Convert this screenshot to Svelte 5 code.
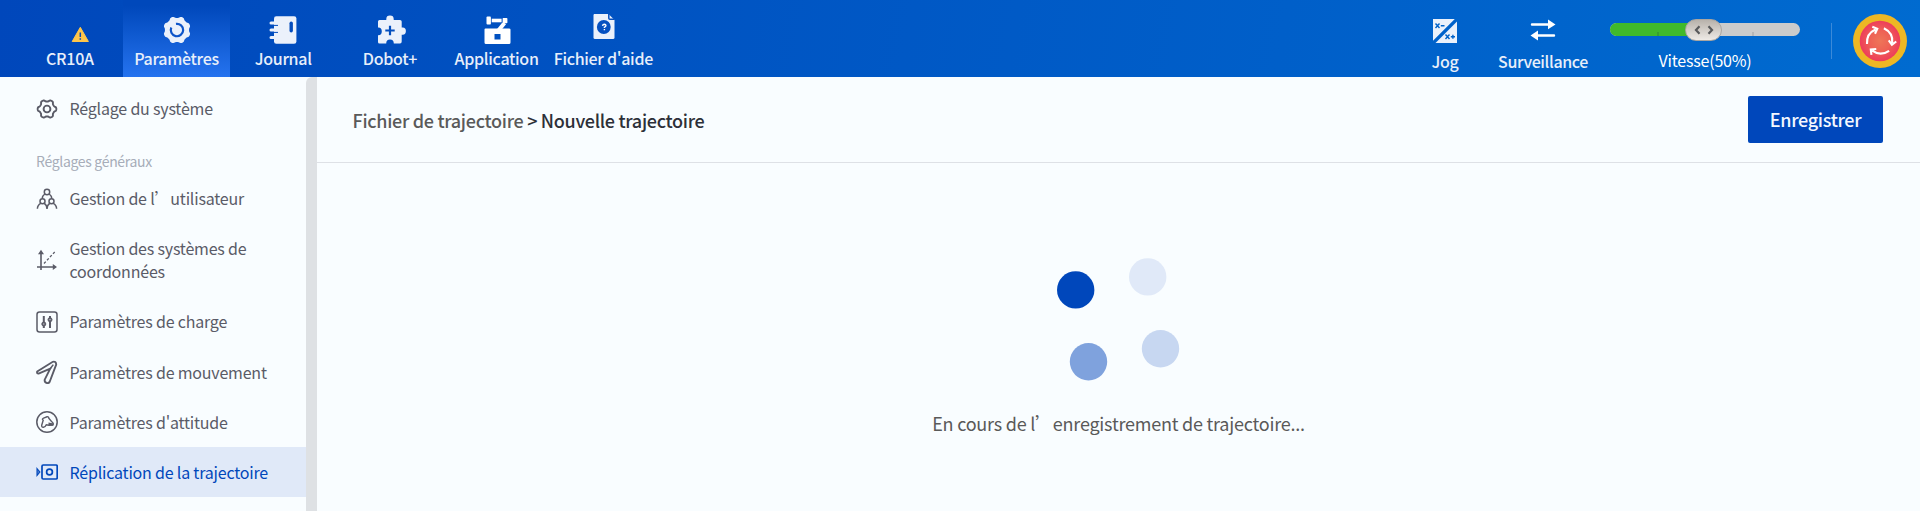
<script>
  const tabs = [
    { id: 'robot', label: 'CR10A' },
    { id: 'settings', label: 'Paramètres', active: true },
    { id: 'journal', label: 'Journal' },
    { id: 'plus', label: 'Dobot+' },
    { id: 'app', label: 'Application' },
    { id: 'help', label: "Fichier d'aide" }
  ];
  const general = [
    { id: 'users', label: 'Gestion de l’utilisateur' },
    { id: 'axes', label: 'Gestion des systèmes de coordonnées' },
    { id: 'load', label: 'Paramètres de charge' },
    { id: 'motion', label: 'Paramètres de mouvement' },
    { id: 'pose', label: "Paramètres d'attitude" },
    { id: 'replay', label: 'Réplication de la trajectoire', active: true }
  ];
  const speed = 50;

  // Scalloped outline: radius r with n lobes of amplitude a around (cx, cy)
  function gear(cx, cy, r, a, n, phase = 0) {
    let d = '';
    for (let i = 0; i < 144; i++) {
      const t = (i / 144) * Math.PI * 2;
      const q = r + a * Math.tanh(1.6 * Math.cos(n * t + phase));
      d += (i ? 'L' : 'M') + (cx + q * Math.cos(t)).toFixed(2) + ' ' + (cy + q * Math.sin(t)).toFixed(2);
    }
    return d + 'Z';
  }
</script>

{#snippet tabIcon(id)}
  <svg class="tab-icon" width="32" height="32" viewBox="0 0 32 32" fill="#ebf1fb">
    {#if id === 'robot'}
      <path d="M26.3 13.3L34.4 27.5H18.2Z" fill="#ffc64a" stroke="#ffc64a" stroke-width="1" stroke-linejoin="round" />
      <path d="M26.3 18.500v4.400M26.3 24.200v1.600" stroke="#0648b5" stroke-width="1.500" />
    {:else if id === 'settings'}
      <path d={gear(16, 16, 12.9, 0.9, 8, Math.PI)} />
      <path d="M10.300 13.500A6.200 6.200 0 1 0 15 9.900" fill="none" stroke="#0e55c9" stroke-width="2.200" />
    {:else if id === 'journal'}
      <rect x="7" y="2.200" width="22.400" height="27.600" rx="2.300" />
      <path d="M4 9h6M4 16h6M4 23.500h6" stroke="#ebf1fb" stroke-width="3" stroke-linecap="round" />
      <path d="M7 11.400h4M7 18.400h4" stroke="#034bbc" stroke-width="1" />
      <rect x="22.500" y="7.500" width="3.400" height="11" rx="1.700" fill="#034bbc" />
    {:else if id === 'plus'}
      <path d="M4 7.500Q4 6 5.500 6H12.300V5a3.700 3.400 0 0 1 7.400 0V6H26Q27.700 6 27.700 7.500V13.500H28.700a3.200 3.600 0 0 1 0 7.200H27.700V27.500Q27.700 29.500 26 29.500H19.800a3.800 4 0 0 0-7.600 0H5.500Q4 29.500 4 28V21.200H4.300a3.500 3.900 0 0 0 0-7.800H4Z" />
      <path d="M16 11.800v9.400M11.300 16.500h9.400" stroke="#034ebe" stroke-width="2.200" />
    {:else if id === 'app'}
      <path fill="#fff" fill-rule="evenodd" d="M4.500 14.500H28Q29.500 14.500 29.500 15.500V28.500Q29.500 30 28 30H5Q3.500 30 3.500 28.500V15.500Q3.500 14.500 4.500 14.500ZM13.500 20v5.500h6V20Z" />
      <rect x="5.500" y="2.500" width="4.500" height="8" rx="1" fill="#fff" />
      <path d="M9.500 6.500h11.500" stroke="#fff" stroke-width="3.600" />
      <rect x="21.400" y="4" width="5" height="5.200" rx=".8" fill="#fff" />
      <path d="M23.500 9L17 17" stroke="#fff" stroke-width="4" />
      <path d="M10.400 3v7M21 4v5" stroke="#0650bf" stroke-width=".8" />
    {:else}
      <path d="M7 0H21.500L27.500 6V23.500Q27.500 25 26 25H8Q6.500 25 6.500 23.500V1Z" />
      <path d="M21.800 0v4.300q0 1 1 1h4.700" fill="none" stroke="#0651c1" stroke-width="1.500" />
      <circle cx="16.800" cy="13" r="6.900" fill="#0651c1" />
      <path d="M15.500 11.800q.3-1.500 1.900-1.500 1.600.1 1.500 1.500-.2.900-1.500 1.400v.8M17.400 14.900v1.300" fill="none" stroke="#fff" stroke-width="1.400" />
    {/if}
  </svg>
{/snippet}

{#snippet menuIcon(id)}
  <svg class="menu-icon" width="22" height="24" viewBox="0 0 22 24" fill="none" stroke="currentColor" stroke-width="1.600">
    {#if id === 'system'}
      <path d={gear(11, 12, 8.4, 1, 6)} stroke-width="1.900" />
      <circle cx="11" cy="12" r="3.400" stroke-width="1.900" />
    {:else if id === 'users'}
      <g stroke-width="1.500">
        <circle cx="11" cy="5" r="2.700" />
        <circle cx="6.500" cy="14.300" r="2.500" />
        <circle cx="15.500" cy="14.300" r="2.500" />
        <path d="M8.800 7Q6.300 8.800 6.200 11.500M13.200 7Q15.700 8.800 15.800 11.500M4.800 16.400Q1.500 18 1.400 21.800M8.200 16.400Q11 18 11 22Q11 18 13.800 16.400M17.200 16.400Q20.500 18 20.600 21.800" />
      </g>
    {:else if id === 'axes'}
      <path d="M5 22V5M1 19H18" />
      <path d="M5 1.800L8 6.300H2ZM21 19L16.800 16V22Z" fill="currentColor" stroke="none" />
      <path d="M8 15.500L18.700 4" stroke-dasharray="2.600 1.800" stroke-width="1.300" />
    {:else if id === 'load'}
      <rect x="1" y="2" width="20" height="20" rx="2.500" stroke-width="1.500" />
      <path d="M7.800 6v12M14 6v12" stroke-width="2" />
      <circle cx="7.800" cy="14" r="2" fill="currentColor" stroke-width="1" />
      <circle cx="14" cy="9.700" r="2" fill="currentColor" stroke-width="1" />
      <path d="M7.800 13.500v1M14 9.200v1" stroke="#f9fcff" stroke-width="1" />
    {:else if id === 'motion'}
      <path d="M1.200 11.500L16.800 1.800Q20 1 20.200 4.600L13.800 21.500Q12.900 23.500 11 23Q8.300 22.400 8.700 19.700L14.200 8.700L3.200 13.300Q.5 14 1.200 11.500Z" stroke-width="1.900" />
      <path d="M14.200 8.700L17.300 4.600" stroke-width="1.500" />
    {:else if id === 'pose'}
      <circle cx="11" cy="12" r="10.200" stroke-width="1.500" />
      <path d="M7.500 17.300Q5.400 17.500 5.700 15.200L7.200 10.300Q5.500 8.900 7.600 8.100L11 6.800Q12.800 6.500 12.800 8.300L15.500 11.500Q18 13.300 17 15L13 15.300L10.300 14.800Q9.200 17.300 7.500 17.300Z" stroke-width="1.400" />
      <path d="M12.500 12.500L17.600 13.500L16.400 15.800L12.500 15Z" fill="currentColor" stroke="none" />
    {:else}
      <rect x="6" y="5" width="15.200" height="14" rx="1.200" stroke-width="1.700" />
      <circle cx="13.500" cy="12" r="2.900" stroke-width="1.700" />
      <path d="M1 8.500L3.900 12L1 15.500Z" fill="currentColor" fill-opacity=".65" stroke-width="1.100" />
    {/if}
  </svg>
{/snippet}

<div class="shell" lang="zh-CN">
  <header>
    <nav>
      {#each tabs as tab}
        <div class="tab" class:active={tab.active}>
          {@render tabIcon(tab.id)}
          <span>{tab.label}</span>
        </div>
      {/each}
    </nav>
    <div class="tools">
      <div class="tool jog">
        <svg width="26" height="26" viewBox="0 0 26 26">
          <path d="M1 1H22.800L1 22.800ZM25 3.500V25H3.500Z" fill="#ebf1fb" />
          <path d="M3.500 5.500l4 4.500M7.500 5.500L3.500 10M8.800 7.700h3.700M13.500 16.500l4 4.500M17.500 16.500l-4 4.500M18.800 18.700h4.200M20.900 16.700v4" stroke="#0062c9" stroke-width="1.400" />
        </svg>
        <span>Jog</span>
      </div>
      <div class="tool monitor">
        <svg width="26" height="26" viewBox="0 0 26 26">
          <path d="M2 7.500H19M24 18.500H8" stroke="#fff" stroke-width="2.400" stroke-linecap="round" />
          <path d="M18 2.400L25.500 7.500L18 12.300ZM8 13.500L.5 18.500L8 23.500Z" fill="#fff" />
        </svg>
        <span>Surveillance</span>
      </div>
      <div class="speed">
        <div class="track">
          <div class="fill" style="width:{speed}%"></div>
          <i class="tick low"></i><i class="tick high"></i>
          <div class="thumb">
            <svg width="20" height="10" viewBox="0 0 20 10" fill="none" stroke="#58595b" stroke-width="2.200">
              <path d="M5.500 1.300L2 5L5.500 8.700M14.500 1.300L18 5L14.500 8.700" />
            </svg>
          </div>
        </div>
        <span>Vitesse({speed}%)</span>
      </div>
      <div class="divider"></div>
      <svg class="stop" width="54" height="54" viewBox="0 0 54 54">
        <defs>
          <radialGradient id="stopFill">
            <stop offset="0" stop-color="#ee7558" />
            <stop offset=".5" stop-color="#ee6255" />
            <stop offset="1" stop-color="#ee3c5b" />
          </radialGradient>
        </defs>
        <circle cx="27" cy="27" r="27" fill="#edb724" />
        <circle cx="27" cy="27" r="20.300" fill="url(#stopFill)" />
        <g fill="none" stroke="#fff" stroke-width="2.100">
          {#each [0, 120, 240] as turn}
            <path transform="rotate({turn} 27 27)" d="M14 30Q13.300 19.500 22.500 15.500M19.300 12.700L24.300 14.800L22 19.800" />
          {/each}
        </g>
      </svg>
    </div>
  </header>

  <div class="body">
    <aside>
      <div class="menu">
        <div class="item first">{@render menuIcon('system')}<span>Réglage du système</span></div>
        <h2>Réglages généraux</h2>
        {#each general as item}
          <div class="item" class:selected={item.active}>
            {@render menuIcon(item.id)}<span>{item.label}</span>
          </div>
        {/each}
      </div>
      <div class="scrollbar"></div>
    </aside>
    <main>
      <div class="heading">
        <h1><span>Fichier de trajectoire</span> &gt; Nouvelle trajectoire</h1>
        <button>Enregistrer</button>
      </div>
      <div class="loading">
        <svg width="124" height="124" viewBox="0 0 124 124">
          <circle cx="19.700" cy="31.900" r="18.700" fill="#0047bb" />
          <circle cx="91.700" cy="18.900" r="18.700" fill="#e0e9f8" />
          <circle cx="104.500" cy="90.700" r="18.700" fill="#c7d7f1" />
          <circle cx="32.500" cy="103.700" r="18.700" fill="#7fa2dd" />
        </svg>
        <p>En cours de l’enregistrement de trajectoire...</p>
      </div>
    </main>
  </div>
</div>

<style>
  .shell {
    width: 1920px;
    height: 511px;
    display: flex;
    flex-direction: column;
    overflow: hidden;
    background: #f9fdff;
    font-family: "Noto Sans CJK SC", sans-serif;
    font-size: 16px;
    color: #5a5b67;
  }
  header {
    flex: none;
    height: 77px;
    display: flex;
    justify-content: space-between;
    background: linear-gradient(100deg, #0047bb, #006bd0);
    color: #e8effa;
    letter-spacing: -0.300px;
  }
  nav { display: flex; padding-left: 16.500px; }
  .tab {
    width: 106.700px;
    box-sizing: border-box;
    padding-top: 14px;
    display: flex;
    flex-direction: column;
    align-items: center;
    font-weight: 500;
    line-height: 24px;
    white-space: nowrap;
  }
  .tab-icon { flex: none; overflow: visible; }
  .active { background: linear-gradient(#0048bb 8%, #2573ef); }
  .tools { display: flex; }
  .tool {
    display: flex;
    flex-direction: column;
    align-items: center;
    padding-top: 18px;
    line-height: 24px;
    gap: 5px;
    font-weight: 500;
  }
  .jog { width: 60px; margin-right: 13px; }
  .monitor { width: 110px; padding-top: 17px; gap: 6px; letter-spacing: -0.380px; }
  .speed {
    width: 190px;
    margin-left: 12px;
    margin-right: 31px;
    padding-top: 23px;
    box-sizing: border-box;
    display: flex;
    flex-direction: column;
    line-height: 24px;
    gap: 12px;
    text-align: center;
    letter-spacing: -0.200px;
    color: #fff;
  }
  .track { position: relative; height: 13px; border-radius: 7px; background: #cbcbcb; }
  .fill { height: 13px; border-radius: 7px 0 0 7px; background: #40b92c; }
  .tick { position: absolute; top: 9px; width: 2px; height: 4px; }
  .low { left: 47px; background: #379e32; }
  .high { left: 142px; background: #b5b6b8; }
  .thumb {
    position: absolute;
    left: 75px;
    top: -4px;
    width: 37px;
    height: 22px;
    box-sizing: border-box;
    border: 1px solid #aaa6a1;
    border-radius: 11px;
    background: linear-gradient(#b8b2ab, #eeeae6);
    display: flex;
    align-items: center;
    justify-content: center;
  }
  .divider { width: 1px; height: 36px; margin-top: 23px; margin-right: 21px; background: #3b8ad9; }
  .stop { margin-top: 14px; margin-right: 13px; }

  .body { flex: 1; display: flex; min-height: 0; }
  aside { width: 317px; flex: none; display: flex; }
  .menu { width: 306px; height: 434px; overflow: hidden; letter-spacing: -0.200px; }
  .scrollbar { width: 11px; background: #dee1e4; border-radius: 6px 0 0 0; }
  .item {
    display: flex;
    align-items: center;
    gap: 11.500px;
    padding: 13.500px 20px 13.650px 36px;
    line-height: 23px;
  }
  .first { padding-top: 20px; }
  .menu-icon { flex: none; height: 24px; margin: -1px 0; }
  h2 {
    margin: 13px 0 0 36px;
    height: 27px;
    line-height: 28px;
    font-size: 14px;
    font-weight: 400;
    letter-spacing: -0.320px;
    color: #a7adb9;
  }
  .selected { background: #e0e9f8; color: #0047bb; }

  main { flex: 1; display: flex; flex-direction: column; }
  .heading {
    height: 86px;
    box-sizing: border-box;
    padding: 0 37px 0 35.500px;
    border-bottom: 1px solid #dee1e6;
    display: flex;
    align-items: center;
    justify-content: space-between;
  }
  h1 { margin: 0; font-size: 18px; font-weight: 500; line-height: 26px; letter-spacing: -0.300px; color: #2d3038; }
  h1 span { color: #5a5a5a; }
  button {
    width: 135px;
    height: 47px;
    border: 0;
    border-radius: 2px;
    background: #0047bb;
    color: #f4f8ff;
    font: 500 18px "Noto Sans CJK SC", sans-serif;
    letter-spacing: -0.300px;
    padding: 0 0 1px;
  }
  .loading { display: flex; flex-direction: column; align-items: center; padding: 95px 2px 0 0; }
  p { margin: 28px -2px 0 0; font-size: 18px; line-height: 26px; letter-spacing: -0.230px; color: #595959; }
</style>
